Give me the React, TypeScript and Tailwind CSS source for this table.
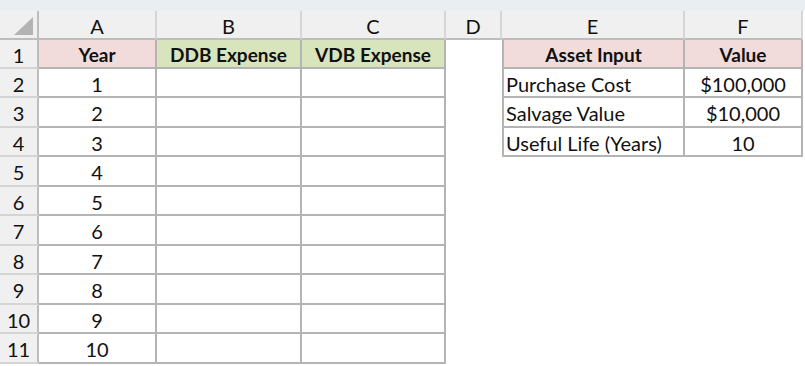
const cols = ["A", "B", "C", "D", "E", "F"];
const rowHeights = ["h-[29px]", "h-[29px]", "h-[30px]", "h-[29px]", "h-[30px]", "h-[29px]", "h-[30px]", "h-[29px]", "h-[30px]", "h-[29px]", "h-[30px]"];
const assets = [
  ["Purchase Cost", "$100,000"],
  ["Salvage Value", "$10,000"],
  ["Useful Life (Years)", "10"],
];

export default function App() {
  return (
    <div
      className="w-[805px] h-[366px] overflow-hidden bg-white text-[20px] leading-none text-[#111]"
      style={{ fontFamily: "Lato, 'Noto Sans', sans-serif" }}
    >
      <div className="h-[11px] bg-[#e8eef2]" />
      <div className="grid grid-cols-[39px_118px_145px_144px_56px_183px_118px]">
        {/* column header row */}
        <div className="relative h-[29px] bg-[#eff0ef] border-r-2 border-b-2 border-[#bdbdbd]">
          <div className="absolute right-[4px] bottom-[3px] w-0 h-0 border-l-[19px] border-l-transparent border-b-[18px] border-b-[#b3b3b3]" />
        </div>
        {cols.map((c) => (
          <div
            key={c}
            className="h-[29px] pt-[2px] flex items-center justify-center bg-[#eff0ef] border-r-2 border-r-[#d6d6d6] border-b-2 border-b-[#bdbdbd]"
          >
            {c}
          </div>
        ))}

        {rowHeights.map((h, i) => {
          const r = i + 1;
          const asset = r >= 2 && r <= 4 ? assets[r - 2] : null;
          return (
            <div key={r} className="contents">
              <div className={`${h} pt-[2px] flex items-center justify-center bg-[#eff0ef] border-r-2 border-r-[#bdbdbd] border-b-2 border-b-[#d4d4d4]`}>
                {r}
              </div>
              {r === 1 ? (
                <>
                  <div className={`${h} pt-[2px] flex items-center justify-center text-[19px] font-bold bg-[#f2dcdb] border-r-2 border-b-2 border-[#b4b4b4]`}>Year</div>
                  <div className={`${h} pt-[2px] flex items-center justify-center text-[19px] font-bold bg-[#d8e4bc] border-r-2 border-b-2 border-[#b4b4b4]`}>DDB Expense</div>
                  <div className={`${h} pt-[2px] flex items-center justify-center text-[19px] font-bold bg-[#d8e4bc] border-r-2 border-b-2 border-[#b4b4b4]`}>VDB Expense</div>
                </>
              ) : (
                <>
                  <div className={`${h} pt-[2px] flex items-center justify-center border-r-2 border-b-2 border-[#b4b4b4]`}>{r - 1}</div>
                  <div className={`${h} border-r-2 border-b-2 border-[#b4b4b4]`} />
                  <div className={`${h} border-r-2 border-b-2 border-[#b4b4b4]`} />
                </>
              )}
              <div className={h} />
              {r === 1 ? (
                <>
                  <div className={`${h} pt-[2px] flex items-center justify-center text-[19px] font-bold bg-[#f2dcdb] border-l-2 border-r-2 border-b-2 border-[#b4b4b4]`}>Asset Input</div>
                  <div className={`${h} pt-[2px] flex items-center justify-center text-[19px] font-bold bg-[#f2dcdb] border-r-2 border-b-2 border-[#b4b4b4]`}>Value</div>
                </>
              ) : asset ? (
                <>
                  <div className={`${h} pt-[2px] flex items-center pl-[2px] border-l-2 border-r-2 border-b-2 border-[#b4b4b4]`}>{asset[0]}</div>
                  <div className={`${h} pt-[2px] flex items-center justify-center border-r-2 border-b-2 border-[#b4b4b4]`}>{asset[1]}</div>
                </>
              ) : (
                <>
                  <div className={h} />
                  <div className={h} />
                </>
              )}
            </div>
          );
        })}
      </div>
    </div>
  );
}
